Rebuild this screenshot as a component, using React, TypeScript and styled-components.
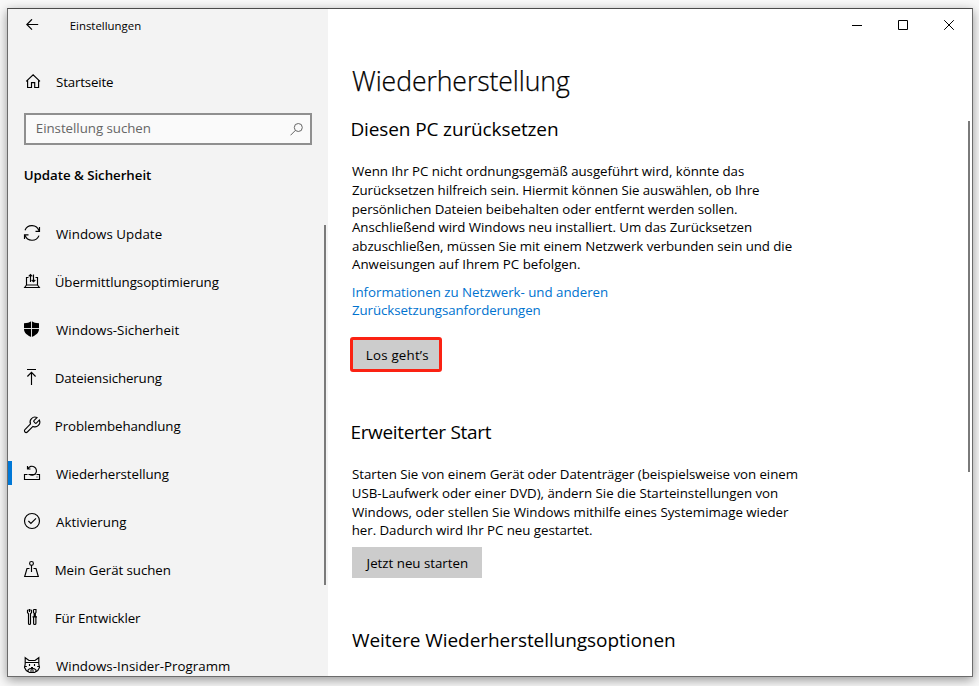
import React from 'react';
import styled, { createGlobalStyle } from 'styled-components';

const GlobalStyle = createGlobalStyle`
  *, *::before, *::after { box-sizing: border-box; }
  body { margin: 0; overflow: hidden; }
`;

const Desktop = styled.div`
  width: 979px;
  height: 686px;
  padding: 8px 6px 9px 7px;
  overflow: hidden;
  background: #f8f8f8;
  font-family: 'Open Sans', 'Segoe UI', 'Noto Sans', sans-serif;
  font-size: 13.3px;
  color: #000;
`;

const Window = styled.div`
  display: flex;
  width: 966px;
  height: 669px;
  border: 1px solid #6b6b6b;
  border-top-color: #4a4a4a;
  background: #fff;
  box-shadow: 0 3px 10px rgba(0, 0, 0, 0.4);
`;

const Sidebar = styled.aside`
  position: relative;
  display: flex;
  flex-direction: column;
  flex: 0 0 320px;
  overflow: hidden;
  background: #f3f3f3;
`;

const Main = styled.main`
  position: relative;
  display: flex;
  flex-direction: column;
  flex: 1;
  overflow: hidden;
`;

/* Text run with its own tracking and optical left alignment */
const Run = styled.span<{ $track?: number; $shift?: number }>`
  display: block;
  white-space: nowrap;
  letter-spacing: ${(p) => p.$track ?? 0}px;
  margin-left: ${(p) => p.$shift ?? 0}px;
`;

const TitleBar = styled.header`
  display: flex;
  align-items: center;
  flex: 0 0 32px;
  padding-left: 18px;
  gap: 31px;
  font-size: 11.4px;
  line-height: 18px;
`;

const AppTitle = styled.div`
  padding-top: 1px;
`;

const Icon = styled.svg.attrs({ width: 16, height: 16, viewBox: '0 0 16 16' })`
  display: block;
  flex: none;
  margin-bottom: 2px;
  overflow: visible;
  fill: none;
  stroke: #000;
  stroke-width: 1.15;
`;

const BackIcon = styled.svg`
  display: block;
  fill: none;
  stroke: #000;
  stroke-width: 1.2;
`;

const HomeLink = styled.a`
  display: flex;
  align-items: center;
  flex: 0 0 48px;
  margin-top: 17px;
  padding-left: 16px;
  gap: 16px;
  line-height: 20px;
`;

const SearchBox = styled.div`
  display: flex;
  align-items: center;
  justify-content: space-between;
  flex: 0 0 32px;
  width: 288px;
  margin: 7px 0 0 16px;
  padding: 0 7px 0 10px;
  border: 2px solid #8f8f8f;
  background: #fafafa;
  color: #666;
  line-height: 20px;
`;

const SearchLabel = styled.div`
  padding-bottom: 2px;
`;

const SearchIcon = styled.svg`
  display: block;
  fill: none;
  stroke: #666;
  stroke-width: 1;
`;

const Category = styled.h3`
  margin: 18px 0 23px 16px;
  font-size: 13.3px;
  font-weight: 600;
  line-height: 24px;
`;

const Nav = styled.nav`
  flex: 1;
  min-height: 0;
  overflow: hidden;
`;

const NavItem = styled.a<{ $active?: boolean }>`
  position: relative;
  display: flex;
  align-items: center;
  height: 48px;
  padding-left: 16px;
  gap: 16px;
  line-height: 20px;

  &::before {
    content: '';
    display: ${(p) => (p.$active ? 'block' : 'none')};
    position: absolute;
    left: 0;
    top: 11px;
    width: 4px;
    height: 24px;
    background: #0078d7;
  }
`;

const Scrollbar = styled.div<{ $top: number; $length: number }>`
  position: absolute;
  right: 2px;
  top: ${(p) => p.$top}px;
  width: 2px;
  height: ${(p) => p.$length}px;
  background: #7a7a7a;
`;

const Caption = styled.div`
  display: flex;
  justify-content: flex-end;
  flex: 0 0 32px;
`;

const CaptionButton = styled.button`
  display: grid;
  place-items: center;
  width: 46px;
  height: 32px;
  padding: 0;
  border: 0;
  background: none;

  svg {
    display: block;
    fill: none;
    stroke: #000;
  }
`;

const Content = styled.div`
  padding: 22px 0 0 24px;
`;

const PageTitle = styled.h1`
  margin: 0 0 16px;
  font-size: 26.6px;
  font-weight: 300;
  line-height: 36px;
  -webkit-text-stroke: 0.25px #000;
`;

const SectionTitle = styled.h2<{ $gap?: number }>`
  margin: ${(p) => p.$gap ?? 0}px 0 0;
  font-size: 19px;
  font-weight: 400;
  line-height: 28px;
`;

const Paragraph = styled.p<{ $gap: number }>`
  margin: ${(p) => p.$gap}px 0 0;
  line-height: 18.6px;
`;

const InfoLink = styled.a`
  display: block;
  margin-top: 8.6px;
  line-height: 18.6px;
  color: #0073cf;
`;

const Button = styled.button`
  display: block;
  width: 130px;
  height: 31px;
  margin-top: 7.1px;
  padding: 1px 0 0 14px;
  border: 0;
  background: #ccc;
  color: #000;
  font: inherit;
  line-height: 20px;
  text-align: left;
`;

const HighlightedButton = styled(Button)`
  width: 92px;
  height: 35px;
  margin: 17.2px 0 0 -2px;
  padding: 2px 0 0 12.8px;
  border: 3px solid #fb2213;
  border-radius: 3px;
`;

type Line = [text: string, track: number, shift?: number];

const Lines = ({ items }: { items: Line[] }) => (
  <>
    {items.map(([text, track, shift]) => (
      <Run key={text} $track={track} $shift={shift}>
        {text}
      </Run>
    ))}
  </>
);

const navItems: { line: Line; active?: boolean; icon: React.ReactNode }[] = [
  {
    line: ['Windows Update', 0.04],
    icon: (
      <>
        <path d="M1 5.2A7.5 7.5 0 0 1 15 5.8M15 10.6A7.5 7.5 0 0 1 1 10.2" />
        <path d="M15.5 2v4.3h-4M.5 14V9.8h4" />
      </>
    ),
  },
  {
    line: ['Übermittlungsoptimierung', -0.052, -1.3],
    icon: (
      <>
        <path d="M4.5 4.5h-2V12h11V4.5h-2M2.5 12 .7 14.5h14.6L13.5 12" />
        <path d="M6.5 9V1.5M4.7 3.3l1.8-1.8 1.8 1.8M9.5 1.5v7.3M7.7 7l1.8 1.8L11.3 7" />
      </>
    ),
  },
  {
    line: ['Windows-Sicherheit', 0.03],
    icon: (
      <>
        <path
          d="M7.5 0C5.5 1.5 3 2.2 0 2.3V8c0 4 3.5 6.5 7.5 8 4-1.5 7.5-4 7.5-8V2.3C12 2.2 9.5 1.5 7.5 0Z"
          fill="#000"
          stroke="none"
        />
        <path d="M7.5 0v16M0 7.5h15" stroke="#f3f3f3" strokeWidth=".9" />
      </>
    ),
  },
  {
    line: ['Dateiensicherung', -0.11, -1.3],
    icon: <path d="M3 .5h9M7.5 16V3.5M3.4 7.5l4.1-4.1 4.1 4.1" />,
  },
  {
    line: ['Problembehandlung', -0.07, -1.3],
    icon: (
      <path
        transform="translate(-2 -1.5) scale(.81)"
        strokeWidth="1.35"
        d="M14.7 6.3a1 1 0 0 0 0 1.4l1.6 1.6a1 1 0 0 0 1.4 0l3.77-3.77a6 6 0 0 1-7.94 7.94l-6.91 6.91a2.12 2.12 0 0 1-3-3l6.91-6.91a6 6 0 0 1 7.94-7.94l-3.76 3.76z"
      />
    ),
  },
  {
    line: ['Wiederherstellung', -0.07],
    active: true,
    icon: (
      <>
        <path d="M3.5 9.5h-3v5h15v-5h-3M4.5 9.5h7" />
        <path d="M4 3.6a4.5 4.5 0 1 1 1.3 5.8M3.5 1v3h3" />
        <path d="M12.5 12h1" />
      </>
    ),
  },
  {
    line: ['Aktivierung', 0.05],
    icon: (
      <>
        <circle cx="8" cy="8" r="7.5" />
        <path d="m4.4 8 2.5 2.5L12 5.4" />
      </>
    ),
  },
  {
    line: ['Mein Gerät suchen', -0.064, -1.3],
    icon: (
      <>
        <circle cx="7.5" cy="2.4" r="1.9" />
        <path d="M7.5 4.3V11M5.5 7.5H3L.7 15.5h13.6L12 7.5H9.5" />
      </>
    ),
  },
  {
    line: ['Für Entwickler', -0.13, -1.3],
    icon: (
      <>
        <path d="M4.5.6 3.5 1.5v2l1 1.3v9.7q0 1 1 1t1-1V4.8l1-1.3v-2l-1-.9M5.5 0v3" />
        <path d="M9.5.5H12v2.8l-.7 1.2v3M9.5.5v2.8l.7 1.2v3M8.5 7.8H13M9.6 7.8v6.7q0 1 1.15 1t1.15-1V7.8" />
      </>
    ),
  },
  {
    line: ['Windows-Insider-Programm', 0.022],
    icon: (
      <>
        <path d="M1.2.7 5 3.5h6L14.8.7V7l.7 3.5-1.8 3-3.2 2h-5l-3.2-2-1.8-3L1.2 7Z" />
        <path d="M1.2 5.5h13.6M.8 9.5h2M15.2 9.5h-2M5.5 7v2M10.5 7v2" />
        <path d="M7 10.5h2M8 10.5v1.3M4 15v-2q2-2.4 4-.8 2-1.6 4 .8v2M6 14h4" />
      </>
    ),
  },
];

export default function App() {
  return (
    <Desktop>
      <GlobalStyle />
      <Window>
        <Sidebar>
          <TitleBar>
            <BackIcon width="13" height="12" viewBox="0 0 13 12">
              <path d="M.8 5.5H12.2M6 .3.8 5.5 6 10.7" />
            </BackIcon>
            <AppTitle>
              <Run $track={0.01} $shift={-0.3}>
                Einstellungen
              </Run>
            </AppTitle>
          </TitleBar>
          <HomeLink>
            <Icon>
              <path d="M2.2 8.4 9.1 1.9 16 8.4M3.6 7.2v7.3h3.9V9.6h3.2v4.9h3.9V7.2" />
            </Icon>
            <Run $track={-0.166}>Startseite</Run>
          </HomeLink>
          <SearchBox>
            <SearchLabel>
              <Run $track={-0.04} $shift={-0.2}>
                Einstellung suchen
              </Run>
            </SearchLabel>
            <SearchIcon width="13" height="13" viewBox="0 0 13 13">
              <circle cx="8.3" cy="4.5" r="4" />
              <path d="M5.4 7.4.5 12.3" />
            </SearchIcon>
          </SearchBox>
          <Category>
            <Run $track={-0.04} $shift={-0.3}>
              Update &amp; Sicherheit
            </Run>
          </Category>
          <Nav>
            {navItems.map(({ line: [text, track, shift], active, icon }) => (
              <NavItem key={text} $active={active}>
                <Icon>{icon}</Icon>
                <Run $track={track} $shift={shift}>
                  {text}
                </Run>
              </NavItem>
            ))}
          </Nav>
          <Scrollbar $top={216} $length={360} />
        </Sidebar>

        <Main>
          <Caption>
            <CaptionButton aria-label="Minimieren">
              <svg width="10" height="10" viewBox="0 0 10 10">
                <path d="M0 5.5h10" />
              </svg>
            </CaptionButton>
            <CaptionButton aria-label="Maximieren">
              <svg width="10" height="10" viewBox="0 0 10 10">
                <path d="M.5.5h9v9h-9z" />
              </svg>
            </CaptionButton>
            <CaptionButton aria-label="Schließen">
              <svg width="10" height="10" viewBox="0 0 10 10">
                <path d="m.2.2 9.6 9.6M9.8.2.2 9.8" />
              </svg>
            </CaptionButton>
          </Caption>

          <Content>
            <PageTitle>
              <Run $track={-0.069}>Wiederherstellung</Run>
            </PageTitle>

            <SectionTitle>
              <Run $track={-0.12} $shift={-1.6}>
                Diesen PC zurücksetzen
              </Run>
            </SectionTitle>
            <Paragraph $gap={19.4}>
              <Lines
                items={[
                  ['Wenn Ihr PC nicht ordnungsgemäß ausgeführt wird, könnte das', -0.028],
                  ['Zurücksetzen hilfreich sein. Hiermit können Sie auswählen, ob Ihre', -0.073],
                  ['persönlichen Dateien beibehalten oder entfernt werden sollen.', -0.068, -0.3],
                  ['Anschließend wird Windows neu installiert. Um das Zurücksetzen', -0.055],
                  ['abzuschließen, müssen Sie mit einem Netzwerk verbunden sein und die', -0.067],
                  ['Anweisungen auf Ihrem PC befolgen.', 0.008],
                ]}
              />
            </Paragraph>
            <InfoLink>
              <Lines
                items={[
                  ['Informationen zu Netzwerk- und anderen', -0.018, -0.3],
                  ['Zurücksetzungsanforderungen', -0.085],
                ]}
              />
            </InfoLink>
            <HighlightedButton>
              <Run $track={0.22}>Los geht’s</Run>
            </HighlightedButton>

            <SectionTitle $gap={46}>
              <Run $track={-0.32} $shift={-1.6}>
                Erweiterter Start
              </Run>
            </SectionTitle>
            <Paragraph $gap={19.5}>
              <Lines
                items={[
                  ['Starten Sie von einem Gerät oder Datenträger (beispielsweise von einem', -0.045],
                  ['USB-Laufwerk oder einer DVD), ändern Sie die Starteinstellungen von', -0.018, -0.3],
                  ['Windows, oder stellen Sie Windows mithilfe eines Systemimage wieder', -0.008],
                  ['her. Dadurch wird Ihr PC neu gestartet.', -0.04, -0.3],
                ]}
              />
            </Paragraph>
            <Button>
              <Run $track={-0.01} $shift={0.6}>
                Jetzt neu starten
              </Run>
            </Button>

            <SectionTitle $gap={48}>
              <Run $track={-0.064}>Weitere Wiederherstellungsoptionen</Run>
            </SectionTitle>
          </Content>
          <Scrollbar $top={112} $length={351} />
        </Main>
      </Window>
    </Desktop>
  );
}
